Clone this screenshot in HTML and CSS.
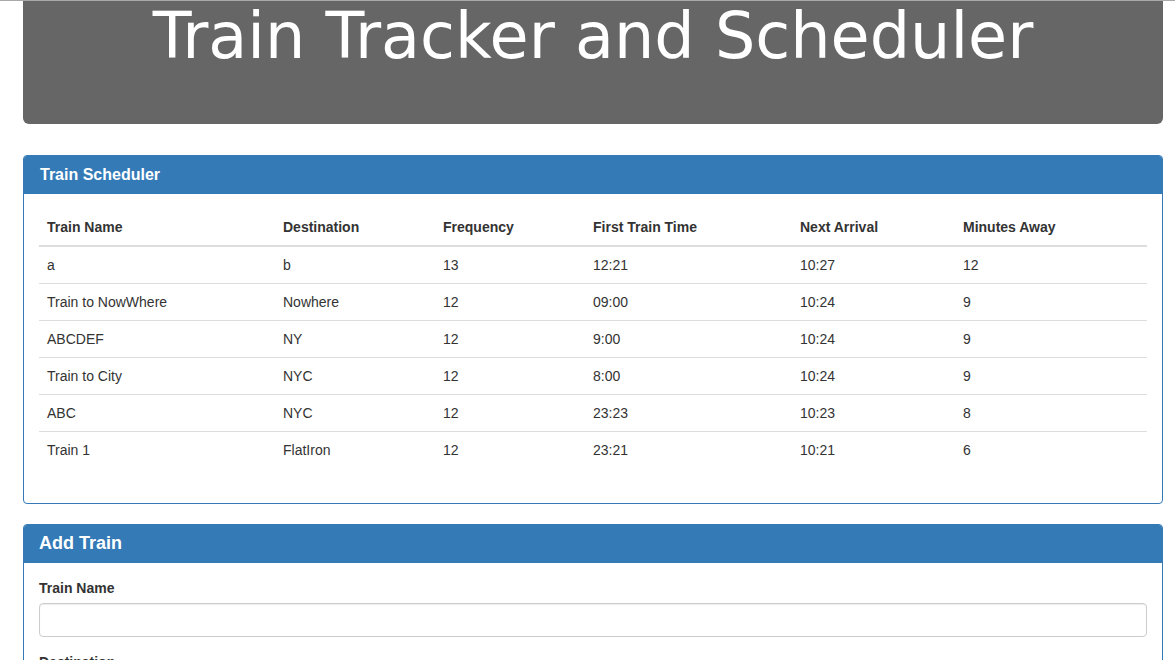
FILE: index.html
```html
<!DOCTYPE html>
<html>
<head>
<meta charset="utf-8">
<title>Train Tracker and Scheduler</title>
<link rel="stylesheet" href="styles.css">
</head>
<body>
<div class="topline"></div>
<div class="container">
  <div class="jumbotron">
    <h1 class="title">Train Tracker and Scheduler</h1>
  </div>

  <div class="panel">
    <div class="panel-heading">
      <h3 class="panel-title">Train Scheduler</h3>
    </div>
    <div class="panel-body">
      <table class="table">
        <colgroup>
          <col class="c1"><col class="c2"><col class="c3"><col class="c4"><col class="c5"><col class="c6">
        </colgroup>
        <thead>
          <tr>
            <th>Train Name</th>
            <th>Destination</th>
            <th>Frequency</th>
            <th>First Train Time</th>
            <th>Next Arrival</th>
            <th>Minutes Away</th>
          </tr>
        </thead>
        <tbody>
          <tr><td>a</td><td>b</td><td>13</td><td>12:21</td><td>10:27</td><td>12</td></tr>
          <tr><td>Train to NowWhere</td><td>Nowhere</td><td>12</td><td>09:00</td><td>10:24</td><td>9</td></tr>
          <tr><td>ABCDEF</td><td>NY</td><td>12</td><td>9:00</td><td>10:24</td><td>9</td></tr>
          <tr><td>Train to City</td><td>NYC</td><td>12</td><td>8:00</td><td>10:24</td><td>9</td></tr>
          <tr><td>ABC</td><td>NYC</td><td>12</td><td>23:23</td><td>10:23</td><td>8</td></tr>
          <tr><td>Train 1</td><td>FlatIron</td><td>12</td><td>23:21</td><td>10:21</td><td>6</td></tr>
        </tbody>
      </table>
    </div>
  </div>

  <div class="panel">
    <div class="panel-heading">
      <h3 class="panel-title large">Add Train</h3>
    </div>
    <div class="panel-body">
      <form class="form">
        <div class="form-group">
          <label class="label" for="train-name">Train Name</label>
          <input class="form-control" id="train-name" type="text">
        </div>
        <div class="form-group">
          <label class="label" for="destination">Destination</label>
          <input class="form-control" id="destination" type="text">
        </div>
      </form>
    </div>
  </div>
</div>
</body>
</html>
```

FILE: styles.css
```css
* {
  box-sizing: border-box;
}

html, body {
  margin: 0;
  padding: 0;
}

body {
  font-family: "Liberation Sans", Arial, sans-serif;
  font-size: 14px;
  line-height: 20px;
  color: #333;
  background: #fff;
  overflow: hidden;
}

.topline {
  height: 1px;
  background: #a9a9a9;
}

.container {
  padding: 0 12px 0 23px;
}

.jumbotron {
  background: #666;
  border-radius: 0 0 6px 6px;
  height: 123px;
  padding-top: 1px;
}

.title {
  margin: 0;
  font-family: "DejaVu Sans", Verdana, sans-serif;
  font-weight: normal;
  font-size: 63.6px;
  line-height: 69px;
  color: #fff;
  text-align: center;
}

.panel {
  margin-top: 31px;
  border: 1px solid #337ab7;
  border-radius: 4px;
  overflow: hidden;
}

.panel + .panel {
  margin-top: 20px;
}

.panel-heading {
  background: #337ab7;
  color: #fff;
  padding: 10px 15px 10px 16px;
  height: 38px;
}

.panel-title {
  margin: 0;
  font-size: 16px;
  line-height: 17px;
  font-weight: bold;
}

.panel-title.large {
  font-size: 18px;
  line-height: 16px;
  margin-left: -1px;
}

.panel-body {
  padding: 15px;
}

.table {
  width: 100%;
  border-collapse: collapse;
  table-layout: fixed;
  margin-bottom: 20px;
}

.c1 { width: 236px; }
.c2 { width: 160px; }
.c3 { width: 150px; }
.c4 { width: 207px; }
.c5 { width: 163px; }
.c6 { width: auto; }

.table th,
.table td {
  padding: 8px;
  text-align: left;
  vertical-align: top;
  line-height: 20px;
  white-space: nowrap;
}

.table th {
  font-weight: bold;
  border-bottom: 2px solid #ddd;
}

.table td {
  border-top: 1px solid #ddd;
}

.form-group {
  margin-bottom: 15px;
}

.label {
  display: block;
  font-weight: bold;
  margin-bottom: 5px;
}

.form-control {
  display: block;
  width: 100%;
  height: 34px;
  padding: 6px 12px;
  font-size: 14px;
  font-family: inherit;
  border: 1px solid #ccc;
  border-radius: 4px;
  box-shadow: inset 0 1px 1px rgba(0,0,0,.075);
  background: #fff;
}
```
